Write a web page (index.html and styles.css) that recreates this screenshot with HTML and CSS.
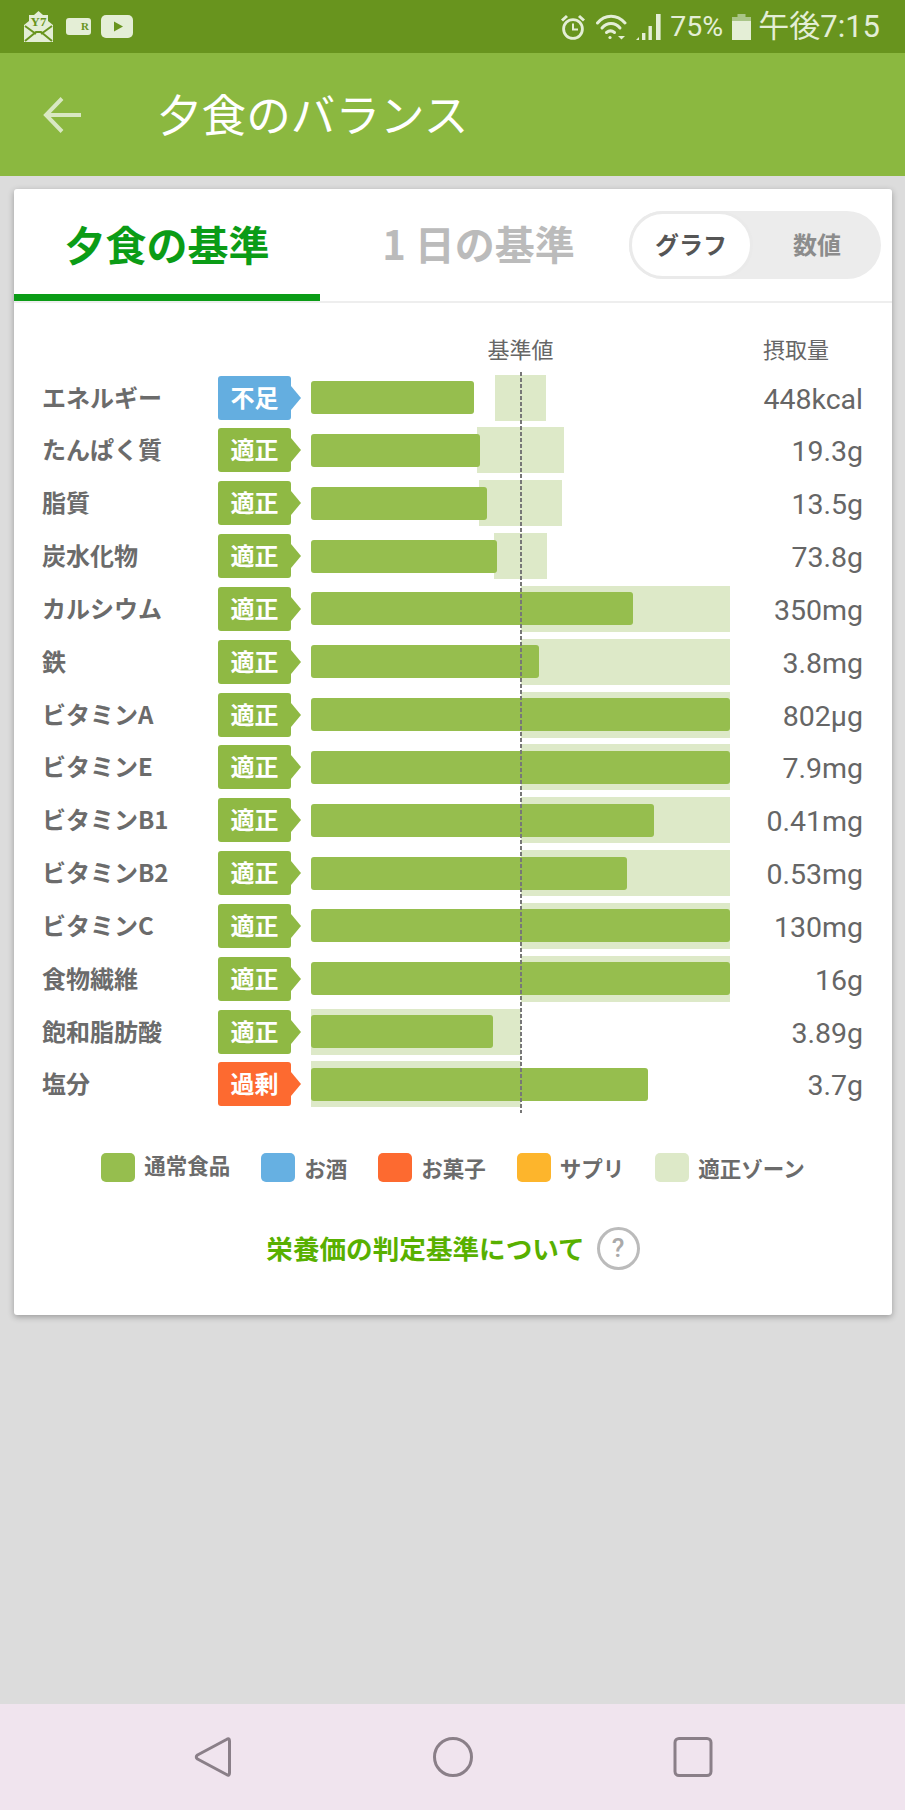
FILE: index.html
```html
<!DOCTYPE html>
<html lang="ja">
<head>
  <meta charset="UTF-8">
  <title>夕食のバランス</title>
  <link rel="stylesheet" href="styles.css">
</head>
<body>
  <div class="status">
    <div class="status-left">
      <svg class="ic-mail" width="29" height="31" viewBox="0 0 29 31">
        <path d="M14.5 0 L19 4 H24 V10 L29 14 V31 H0 V14 L5 10 V4 H10 Z" fill="#e4eed6"/>
        <path d="M1 15 L12 23 M28 15 L17 23 M1 30 L12 21 H17 L28 30" stroke="#68941e" stroke-width="2" fill="none"/>
        <text x="14.5" y="15" text-anchor="middle" class="ic-mail-text">Y7</text>
      </svg>
      <svg class="ic-r" width="25" height="17" viewBox="0 0 25 17">
        <rect width="25" height="17" rx="3" fill="#e4eed6"/>
        <text x="19" y="12" text-anchor="middle" class="ic-r-text">R</text>
      </svg>
      <svg class="ic-play" width="32" height="23" viewBox="0 0 32 23">
        <rect width="32" height="23" rx="5" fill="#e4eed6"/>
        <path d="M13 6.5 L22 11.5 L13 16.5 Z" fill="#68941e"/>
      </svg>
    </div>
    <div class="status-right">
      <svg class="ic-alarm" width="26" height="26" viewBox="0 0 26 26" fill="none" stroke="#e4eed6" stroke-width="2.8">
        <circle cx="13" cy="15" r="9.4"/>
        <path d="M13 9.5 V15.5 H18" stroke-width="2"/>
        <path d="M2 6.5 L7 2 M24 6.5 L19 2" stroke-width="3"/>
      </svg>
      <svg class="ic-wifi" width="31" height="26" viewBox="0 0 31 26" fill="none" stroke="#e4eed6" stroke-width="3" stroke-linecap="round">
        <path d="M1.5 9 C9 0 21 0 29 9"/>
        <path d="M6 14 C11 8 19 8 24 14"/>
        <path d="M10.5 18.5 C13 16.5 16 16.5 18.5 18.5"/>
        <circle cx="14" cy="23.5" r="1.6" fill="#e4eed6" stroke="none"/>
        <path d="M22 22 H29 L25.5 25.5 Z" fill="#e4eed6" stroke="none"/>
      </svg>
      <svg class="ic-signal" width="26" height="26" viewBox="0 0 26 26" fill="#e4eed6">
        <path d="M0 26 L3 23 V26 Z"/>
        <rect x="6" y="19" width="3.4" height="7"/>
        <rect x="12.5" y="12" width="3.4" height="14"/>
        <rect x="20" y="0" width="4.6" height="26"/>
      </svg>
      <span class="status-pct">75%</span>
      <svg class="ic-battery" width="19" height="26" viewBox="0 0 19 26">
        <path d="M5.5 0 H13.5 V3 H19 V7 H0 V3 H5.5 Z" fill="#a9c587"/>
        <rect y="7" width="19" height="19" fill="#e4eed6"/>
      </svg>
      <span class="status-time">午後7:15</span>
    </div>
  </div>

  <div class="appbar">
    <svg class="ic-back" width="38" height="36" viewBox="0 0 38 36" fill="none" stroke="#d9e8c2" stroke-width="4">
      <path d="M38 18 H3 M19 1.5 L3 18 L19 34.5"/>
    </svg>
    <h1>夕食のバランス</h1>
  </div>

  <div class="main">
    <div class="card">
      <div class="tabs">
        <div class="tab active">夕食の基準</div>
        <div class="tab">1 日の基準</div>
        <div class="toggle">
          <div class="toggle-on">グラフ</div>
          <div class="toggle-off">数値</div>
        </div>
      </div>

      <div class="head">
        <div class="head-mid">基準値</div>
        <div class="head-right">摂取量</div>
      </div>

      <div class="rows">
        <div class="baseline"></div>

        <div class="row">
          <div class="name">エネルギー</div>
          <div class="badge low">不足</div>
          <div class="track"><div class="zone" style="left:184px;width:51px"></div><div class="bar" style="width:163px"></div></div>
          <div class="val">448kcal</div>
        </div>
        <div class="row">
          <div class="name">たんぱく質</div>
          <div class="badge">適正</div>
          <div class="track"><div class="zone" style="left:166px;width:87px"></div><div class="bar" style="width:169px"></div></div>
          <div class="val">19.3g</div>
        </div>
        <div class="row">
          <div class="name">脂質</div>
          <div class="badge">適正</div>
          <div class="track"><div class="zone" style="left:168px;width:83px"></div><div class="bar" style="width:176px"></div></div>
          <div class="val">13.5g</div>
        </div>
        <div class="row">
          <div class="name">炭水化物</div>
          <div class="badge">適正</div>
          <div class="track"><div class="zone" style="left:183px;width:53px"></div><div class="bar" style="width:186px"></div></div>
          <div class="val">73.8g</div>
        </div>
        <div class="row">
          <div class="name">カルシウム</div>
          <div class="badge">適正</div>
          <div class="track"><div class="zone" style="left:210px;width:209px"></div><div class="bar" style="width:322px"></div></div>
          <div class="val">350mg</div>
        </div>
        <div class="row">
          <div class="name">鉄</div>
          <div class="badge">適正</div>
          <div class="track"><div class="zone" style="left:210px;width:209px"></div><div class="bar" style="width:228px"></div></div>
          <div class="val">3.8mg</div>
        </div>
        <div class="row">
          <div class="name">ビタミンA</div>
          <div class="badge">適正</div>
          <div class="track"><div class="zone" style="left:210px;width:209px"></div><div class="bar" style="width:419px"></div></div>
          <div class="val">802µg</div>
        </div>
        <div class="row">
          <div class="name">ビタミンE</div>
          <div class="badge">適正</div>
          <div class="track"><div class="zone" style="left:210px;width:209px"></div><div class="bar" style="width:419px"></div></div>
          <div class="val">7.9mg</div>
        </div>
        <div class="row">
          <div class="name">ビタミンB1</div>
          <div class="badge">適正</div>
          <div class="track"><div class="zone" style="left:210px;width:209px"></div><div class="bar" style="width:343px"></div></div>
          <div class="val">0.41mg</div>
        </div>
        <div class="row">
          <div class="name">ビタミンB2</div>
          <div class="badge">適正</div>
          <div class="track"><div class="zone" style="left:210px;width:209px"></div><div class="bar" style="width:316px"></div></div>
          <div class="val">0.53mg</div>
        </div>
        <div class="row">
          <div class="name">ビタミンC</div>
          <div class="badge">適正</div>
          <div class="track"><div class="zone" style="left:210px;width:209px"></div><div class="bar" style="width:419px"></div></div>
          <div class="val">130mg</div>
        </div>
        <div class="row">
          <div class="name">食物繊維</div>
          <div class="badge">適正</div>
          <div class="track"><div class="zone" style="left:210px;width:209px"></div><div class="bar" style="width:419px"></div></div>
          <div class="val">16g</div>
        </div>
        <div class="row">
          <div class="name">飽和脂肪酸</div>
          <div class="badge">適正</div>
          <div class="track"><div class="zone" style="left:0;width:210px"></div><div class="bar" style="width:182px"></div></div>
          <div class="val">3.89g</div>
        </div>
        <div class="row">
          <div class="name">塩分</div>
          <div class="badge over">過剰</div>
          <div class="track"><div class="zone" style="left:0;width:210px"></div><div class="bar" style="width:337px"></div></div>
          <div class="val">3.7g</div>
        </div>
      </div>

      <div class="legend">
        <div class="legend-item first"><span class="swatch food"></span><span>通常食品</span></div>
        <div class="legend-item"><span class="swatch drink"></span><span>お酒</span></div>
        <div class="legend-item"><span class="swatch snack"></span><span>お菓子</span></div>
        <div class="legend-item"><span class="swatch supp"></span><span>サプリ</span></div>
        <div class="legend-item"><span class="swatch range"></span><span>適正ゾーン</span></div>
      </div>

      <div class="about">
        <span class="about-text">栄養価の判定基準について</span>
        <span class="about-q">?</span>
      </div>
    </div>
  </div>

  <div class="nav">
    <svg width="40" height="40" viewBox="0 0 40 40" fill="none" stroke="#8a7f88" stroke-width="3" stroke-linejoin="round">
      <path d="M33.5 2.5 Q36.5 0.5 36.5 4 V36 Q36.5 39.5 33.5 37.5 L4.5 22 Q2 20 4.5 18 Z"/>
    </svg>
    <svg width="40" height="40" viewBox="0 0 40 40" fill="none" stroke="#8a7f88" stroke-width="3">
      <circle cx="20" cy="20" r="18.5"/>
    </svg>
    <svg width="40" height="40" viewBox="0 0 40 40" fill="none" stroke="#8a7f88" stroke-width="3">
      <rect x="2" y="1.5" width="36" height="37" rx="4"/>
    </svg>
  </div>
</body>
</html>
```

FILE: styles.css
```css
* {
  box-sizing: border-box;
}
body {
  margin: 0;
  width: 905px;
  height: 1810px;
  display: flex;
  flex-direction: column;
  font-family: "Noto Sans CJK JP", "Noto Sans", sans-serif;
  background: #dcdcdc;
  color: #666;
}

/* status bar */
.status {
  height: 53px;
  background: #68941e;
  display: flex;
  justify-content: space-between;
  align-items: center;
  padding: 0 25px 0 24px;
  color: #e4eed6;
}
.status-left, .status-right {
  display: flex;
  align-items: center;
}
.ic-r { margin-left: 13px; }
.ic-play { margin-left: 10px; }
.ic-mail-text {
  font: bold 13px "Liberation Serif", serif;
  fill: #68941e;
}
.ic-r-text {
  font: bold 11px "Liberation Serif", serif;
  fill: #68941e;
}
.ic-wifi { margin-left: 10px; }
.ic-signal { margin-left: 9px; }
.status-pct {
  margin-left: 8px;
  font-family: Roboto, sans-serif;
  font-size: 28.5px;
  line-height: 30px;
}
.ic-battery { margin-left: 9px; }
.status-time {
  margin-left: 7px;
  font-family: Roboto, "Noto Sans CJK JP", sans-serif;
  font-size: 31px;
  line-height: 36px;
}

/* app bar */
.appbar {
  height: 123px;
  background: #8bb840;
  display: flex;
  align-items: center;
  padding-left: 43px;
}
.appbar h1 {
  margin: 0 0 4px 76px;
  font-size: 44.6px;
  font-weight: 400;
  color: #fff;
  line-height: 60px;
}

.main {
  flex: 1;
  padding: 13px 13px 0 14px;
}
.card {
  background: #fff;
  border-radius: 3px;
  box-shadow: 0 2px 6px rgba(0, 0, 0, 0.3);
  padding-bottom: 45px;
}

/* tabs */
.tabs {
  height: 114px;
  display: flex;
  border-bottom: 2px solid #eee;
}
.tab {
  height: 112px;
  padding-left: 8px;
  font-size: 40px;
  font-weight: 700;
  line-height: 108px;
  text-align: center;
  color: #bbb;
  width: 309px;
}
.tab.active {
  width: 306px;
  padding-left: 0;
  font-size: 41px;
  color: #0b9c16;
  border-bottom: 7px solid #0b9c16;
  margin-bottom: -1px;
}
.toggle {
  width: 252px;
  height: 68px;
  margin-top: 22px;
  border-radius: 34px;
  background: #ececec;
  display: flex;
  align-items: center;
  font-size: 24px;
  font-weight: 700;
  line-height: 30px;
}
.toggle-on {
  width: 124px;
  height: 68px;
  line-height: 60px;
  border: 3px solid #eaeaea;
  border-radius: 34px;
  background: #fff;
  color: #555;
  text-align: center;
}
.toggle-off {
  width: 128px;
  padding-bottom: 2px;
  text-align: center;
  color: #8c8c8c;
}

/* table */
.head {
  display: flex;
  height: 26px;
  margin: 32px 0 13.5px;
  padding-left: 297px;
  font-size: 22px;
  line-height: 26px;
}
.head-mid {
  width: 419px;
  text-align: center;
}
.head-right {
  flex: 1;
  padding-right: 63px;
  text-align: right;
}
.rows {
  position: relative;
  display: grid;
  grid-auto-rows: 46px;
  row-gap: 6.85px;
}
.baseline {
  position: absolute;
  left: 506px;
  top: -3px;
  bottom: -6px;
  width: 2px;
  z-index: 2;
  background: repeating-linear-gradient(#777 0 4px, transparent 4px 6px);
}
.row {
  display: flex;
  align-items: center;
  padding-left: 28px;
}
.name {
  width: 176px;
  padding-bottom: 2px;
  font-size: 24px;
  font-weight: 700;
  line-height: 30px;
  color: #6b6b6b;
}
.badge {
  position: relative;
  width: 73px;
  height: 44px;
  margin-right: 20px;
  border-radius: 3px;
  background: #8fb944;
  color: #fff;
  font-size: 24px;
  font-weight: 700;
  line-height: 42px;
  text-align: center;
}
.badge::after {
  content: "";
  position: absolute;
  left: 73px;
  top: 10px;
  border-left: 10px solid #8fb944;
  border-top: 12px solid transparent;
  border-bottom: 12px solid transparent;
}
.badge.low { background: #64aee0; }
.badge.low::after { border-left-color: #64aee0; }
.badge.over { background: #fd6a30; }
.badge.over::after { border-left-color: #fd6a30; }
.track {
  position: relative;
  width: 419px;
  height: 46px;
  display: flex;
  align-items: center;
}
.zone {
  position: absolute;
  top: 0;
  bottom: 0;
  background: #dde9c8;
}
.bar {
  position: relative;
  height: 33px;
  border-radius: 3px;
  background: #96be4e;
}
.val {
  flex: 1;
  padding-right: 29px;
  padding-top: 4px;
  font-family: Roboto, sans-serif;
  font-size: 28.5px;
  line-height: 32px;
  text-align: right;
  color: #666;
}

/* legend */
.legend {
  display: flex;
  justify-content: center;
  gap: 31px;
  margin-top: 45.5px;
}
.legend-item {
  display: flex;
  align-items: center;
  gap: 9px;
  font-size: 21.5px;
  font-weight: 700;
  line-height: 29px;
  color: #6b6b6b;
}
.legend-item.first span:last-child {
  margin-top: -6px;
}
.swatch {
  width: 34px;
  height: 29px;
  border-radius: 5px;
}
.food { background: #96be4e; }
.drink { background: #66b0e2; }
.snack { background: #fd6a30; }
.supp { background: #fdb52c; }
.range { background: #dde9c8; }

/* link */
.about {
  display: flex;
  justify-content: center;
  align-items: center;
  gap: 12px;
  margin-top: 45px;
}
.about-text {
  font-size: 26.6px;
  font-weight: 700;
  line-height: 34px;
  color: #58b000;
}
.about-q {
  width: 43px;
  height: 43px;
  border: 3px solid #bbb;
  border-radius: 50%;
  font-family: Roboto, sans-serif;
  font-size: 26px;
  font-weight: 500;
  line-height: 37px;
  text-align: center;
  color: #aaa;
}

/* nav bar */
.nav {
  height: 106px;
  background: #f0e4ee;
  display: flex;
  justify-content: center;
  align-items: center;
  gap: 200px;
}
```
